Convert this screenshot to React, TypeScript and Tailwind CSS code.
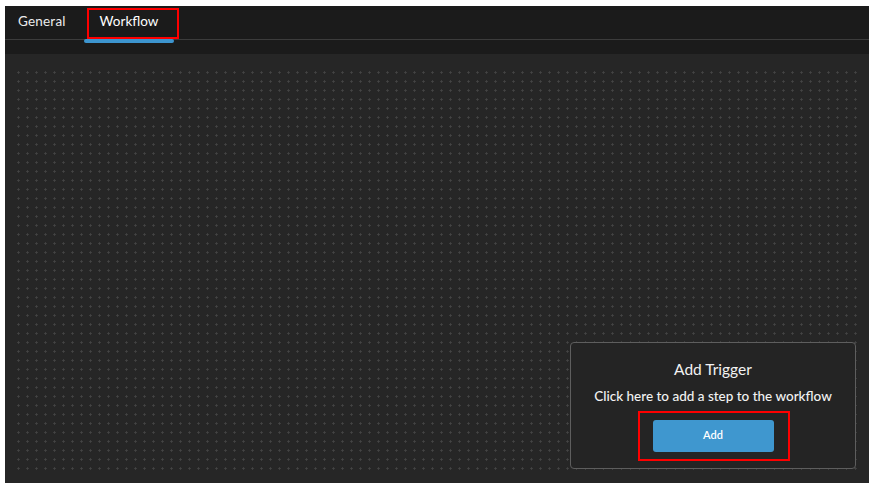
export default function App() {
  return (
    <div className="h-[483px] w-[874px] bg-white pt-[6px] pl-[5px] pr-[5px] font-['Lato',sans-serif]">
      <div className="relative flex h-[477px] flex-col bg-[#1b1b1b]">
        {/* Tabs */}
        <div className="relative flex h-[34px] items-center border-b border-[#3c3c3c] text-[13.5px] text-[#ececec]">
          <div className="ml-[13px] w-[66px] pb-[3px] tracking-[0.2px]">General</div>
          <div className="relative flex h-full w-[90px] items-center justify-center pb-[3px] text-white">
            Workflow
            <span className="absolute bottom-[-4px] left-0 h-[4px] w-[90px] rounded-sm bg-[#3d95cf]" />
          </div>
        </div>
        <div className="h-[14px]" />

        {/* Canvas */}
        <div className="relative flex-1 bg-[#262626] px-[9px] pt-[14px] pb-[8px]">
          <div className="h-full w-full bg-[radial-gradient(circle,#444444_0.9px,transparent_1.3px)] bg-[size:9px_9px]" />

          <div className="absolute right-[13px] bottom-[14px] flex h-[127px] w-[286px] flex-col items-center rounded-[4px] border border-[#5e5e5e] bg-[#242424]">
            <div className="mt-[15px] text-[15.5px] text-[#f2f2f2]">Add Trigger</div>
            <div className="mt-[5px] text-[13.5px] font-medium text-[#f2f2f2]">Click here to add a step to the workflow</div>
            <button className="mt-[13px] h-[32px] w-[121px] rounded-[3px] bg-[#3f97cf] text-[11px] font-semibold text-white">
              Add
            </button>
          </div>
        </div>

        {/* Annotation boxes */}
        <div className="pointer-events-none absolute left-[82px] top-[2px] h-[31px] w-[92px] border-2 border-[#ff0000]" />
        <div className="pointer-events-none absolute left-[633px] top-[405px] h-[50px] w-[152px] border-2 border-[#ff0000]" />
      </div>
    </div>
  );
}
